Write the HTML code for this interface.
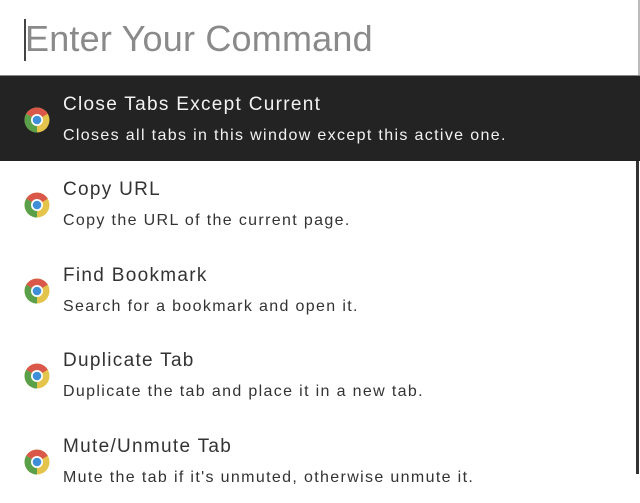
<!DOCTYPE html>
<html><head><meta charset="utf-8"><style>
*{margin:0;padding:0;box-sizing:border-box}
body{width:640px;height:474px;overflow:hidden;background:#fff;font-family:"Liberation Sans",sans-serif;position:relative}
.inp{position:absolute;left:25px;top:18px;font-size:36px;color:#8a8a8a;font-weight:300;letter-spacing:0.2px}
.cur{position:absolute;left:24px;top:19px;width:2px;height:42px;background:#444}
.rb{position:absolute;right:0;top:0;width:2px;height:76px;background:#bbb}
.rb2{position:absolute;right:1px;top:161px;width:3px;height:313px;background:#333}
.topline{position:absolute;left:0;top:75px;width:640px;height:1px;background:#888}
.row{position:absolute;left:0;width:636px;height:85px}
.row.sel{background:#232323;width:640px}
.t{position:absolute;left:63px;top:18px;font-size:19px;color:#333;letter-spacing:1.3px;white-space:nowrap}
.d{position:absolute;left:63px;top:51px;font-size:16px;color:#333;letter-spacing:1.35px;white-space:nowrap}
.sel .t,.sel .d{color:#f2f2f2}
.ic{position:absolute;left:24px;top:31px;width:26px;height:26px}
</style></head><body>
<div class="cur"></div>
<div class="inp">Enter Your Command</div>
<div class="rb"></div>
<div class="topline"></div>
<div class="rb2"></div>
<svg width="0" height="0" style="position:absolute"><defs>
<symbol id="chr" viewBox="0 0 26 26">
<circle cx="13" cy="13" r="12.5" fill="#e4c44a"/>
<path d="M13 13 L2.2 6.8 A12.5 12.5 0 0 1 23.8 6.8 Z" fill="#d9584a"/>
<path d="M13 13 L2.2 6.8 A12.5 12.5 0 0 0 13 25.5 Z" fill="#5aa04a"/>
<circle cx="13" cy="13" r="6" fill="#fff"/>
<circle cx="13" cy="13" r="4.3" fill="#3e8fd8"/>
</symbol></defs></svg>
<div class="row sel" style="top:76px"><svg class="ic"><use href="#chr"/></svg><div class="t">Close Tabs Except Current</div><div class="d">Closes all tabs in this window except this active one.</div></div>
<div class="row" style="top:161px"><svg class="ic"><use href="#chr"/></svg><div class="t">Copy URL</div><div class="d">Copy the URL of the current page.</div></div>
<div class="row" style="top:247px"><svg class="ic"><use href="#chr"/></svg><div class="t">Find Bookmark</div><div class="d">Search for a bookmark and open it.</div></div>
<div class="row" style="top:332px"><svg class="ic"><use href="#chr"/></svg><div class="t">Duplicate Tab</div><div class="d">Duplicate the tab and place it in a new tab.</div></div>
<div class="row" style="top:418px"><svg class="ic"><use href="#chr"/></svg><div class="t">Mute/Unmute Tab</div><div class="d">Mute the tab if it's unmuted, otherwise unmute it.</div></div>
</body></html>
